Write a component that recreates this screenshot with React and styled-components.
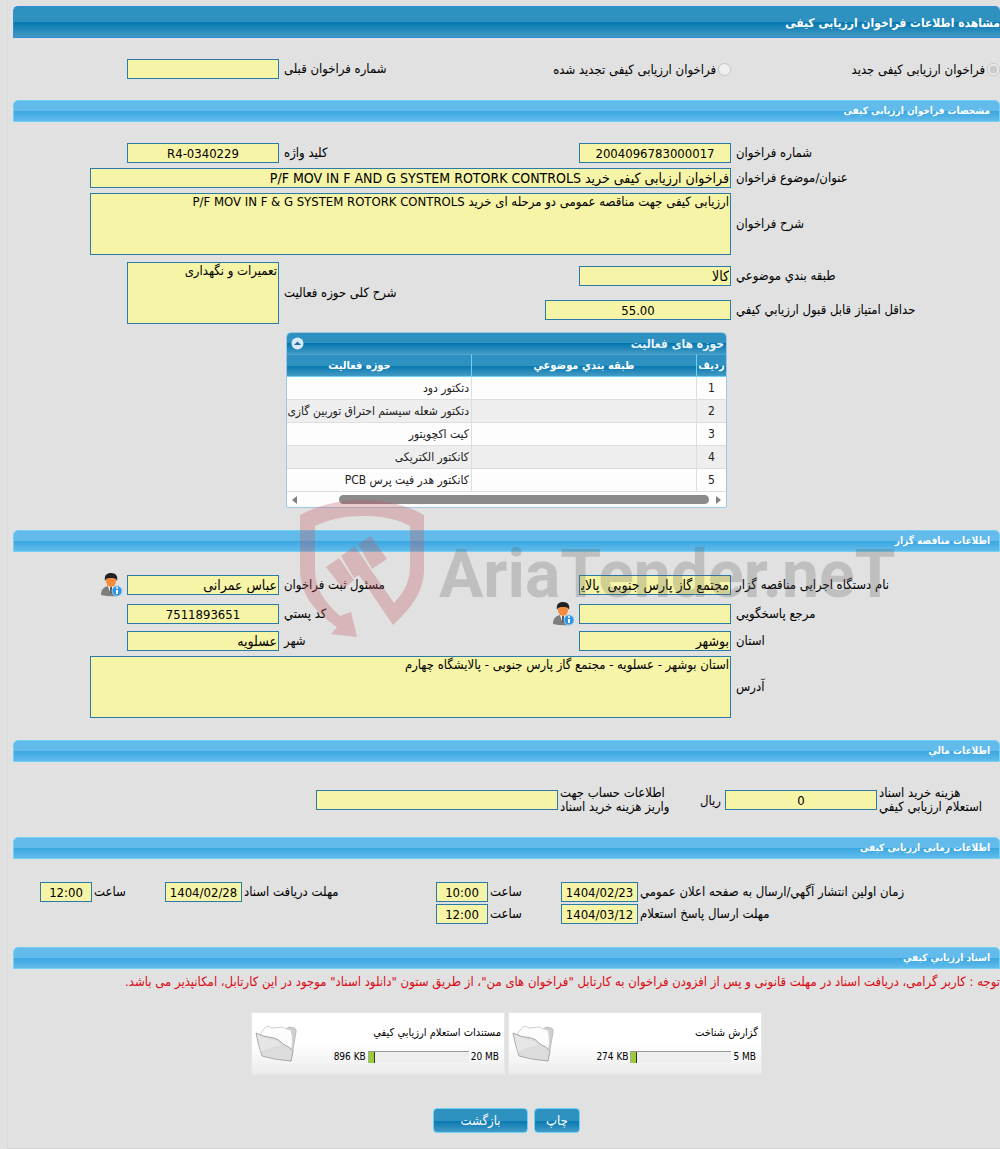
import React, { useState } from "react";
import styled, { createGlobalStyle, css } from "styled-components";

const GlobalStyle = createGlobalStyle`
    * {
        box-sizing: border-box;
    }

    body {
        margin: 0;
        background: #e1e1e1;
        color: #000;
        font-family: Tahoma, "DejaVu Sans Condensed", "DejaVu Sans", sans-serif;
        font-size: 13px;
    }

    input, textarea, button {
        margin: 0;
        font-family: inherit;
    }
`;

const darkGloss = css`
    background: linear-gradient(#2e91c0 0, #2e91c0 50%, #0477b0 50%, #439ac4 100%);
`;

const Page = styled.main`
    position: relative;
    margin-left: 7px;
    padding: 6px 0 15px 0;
    padding-left: 5px;
    border-left: 1px solid #dadada;
    border-bottom: 1px solid #d2d2d2;
    overflow: hidden;
`;

const Title = styled.h1`
    ${darkGloss}
    margin: 0;
    height: 32px;
    line-height: 32px;
    border: 1px solid #2b8dd6;
    border-right: 0;
    border-radius: 5px 5px 0 0;
    color: #fff;
    font-size: 12px;
    font-weight: bold;
`;

const Section = styled.h2`
    margin: 0;
    height: 22px;
    padding: 0 9px;
    line-height: 20px;
    border: 1px solid #72d0f5;
    border-radius: 5px 5px 0 0;
    background: linear-gradient(#62bbea 0, #62bbea 50%, #39a7e2 50%, #62bbea 100%);
    color: #fff;
    font-size: 10px;
    font-weight: bold;
`;

const Form = styled.div`
    display: flex;
    flex-direction: column;
    gap: ${props => props.$gap || 5}px;
    padding-top: ${props => props.$top || 21}px;
    padding-bottom: ${props => props.$bottom || 22}px;
`;

const Line = styled.div`
    display: grid;
    grid-template-columns: ${props => props.$cols || "269fr 452fr 266fr"};
    align-items: center;
    ${props => props.$apart && css`
        padding-top: 2px;
    `}
`;

const Cell = styled.div`
    display: flex;
    align-items: center;
    gap: 4px;
    min-width: 0;
    ${props => props.$span && css`
        grid-column: span ${props.$span};
    `}
`;

const Stack = styled.div`
    display: flex;
    flex-direction: column;
    gap: 14px;
`;

const Label = styled.label`
    margin-right: auto;
    padding-left: ${props => props.$near ? 2 : 5}px;
    line-height: ${props => props.$tall ? 14 : 20}px;
    text-align: left;
    white-space: nowrap;
`;

const LabelStack = styled(Stack)`
    margin-right: auto;
`;

const RadioLabel = styled.label`
    display: flex;
    align-items: center;
    gap: 2px;
    white-space: nowrap;
`;

const Radio = styled.input`
    width: 13px;
    height: 13px;
`;

const box = css`
    border: 1px solid #2a7aaa;
    border-radius: 0;
    outline: none;
    background: #f6f4a6;
    color: #000;
`;

const Field = styled.input`
    ${box}
    flex: none;
    width: ${props => props.$width || 152}px;
    height: 20px;
    padding: 0 1px;
    font-size: ${props => props.$center ? 13 : 14}px;
    text-align: ${props => props.$center ? "center" : "right"};
`;

const Area = styled.textarea`
    ${box}
    display: block;
    width: ${props => props.$width || 152}px;
    height: 62px;
    padding: 0 1px;
    line-height: 15px;
    font-size: 13px;
    resize: none;
`;

const Panel = styled.section`
    width: 441px;
    margin: 3px auto 0;
    border: 1px solid #9cc8e4;
    border-radius: 5px 5px 2px 2px;
    background: #fdfdfd;
    overflow: hidden;
`;

const PanelHead = styled.div`
    ${darkGloss}
    display: flex;
    align-items: center;
    justify-content: space-between;
    height: 21px;
    padding: 0 2px 0 4px;
    color: #e8f4fb;
`;

const PanelTitle = styled.h3`
    margin: 0;
    font-size: 12px;
`;

const Collapse = styled.button`
    display: flex;
    padding: 0;
    border: 0;
    background: none;
`;

const Table = styled.table`
    width: 479px;
    table-layout: fixed;
    border-collapse: separate;
    border-spacing: 0;
    font-size: 12px;

    th {
        ${darkGloss}
        height: 23px;
        padding: 0;
        border-top: 1px solid #4aa3d6;
        border-bottom: 1px solid #72d0f5;
        border-left: 1px solid #72d0f5;
        color: #fff;
        font-size: 11px;
    }

    td {
        height: 23px;
        padding: 0 2px;
        border-bottom: 1px solid #dedede;
        border-left: 1px solid #dedede;
        color: #222;
        white-space: nowrap;
    }

    td:first-child {
        text-align: center;
    }

    tbody tr:nth-child(even) {
        background: #eee;
    }
`;

const Scroll = styled.div`
    display: flex;
    align-items: center;
    gap: 7px;
    height: 15px;
    padding: 0 5px;
`;

const Thumb = styled.div`
    width: 370px;
    height: 9px;
    border-radius: 5px;
    background: #8b8b8b;
`;

const ArrowRight = styled.div`
    border: 4px solid transparent;
    border-left: 5px solid #808080;
    border-right: 0;
`;

const ArrowLeft = styled.div`
    margin-right: auto;
    border: 4px solid transparent;
    border-right: 5px solid #808080;
    border-left: 0;
`;

const Notice = styled.p`
    margin: 5px 0 22px;
    line-height: 16px;
    color: #d90a14;
    white-space: nowrap;
`;

const Files = styled.div`
    display: flex;
    justify-content: center;
    gap: 3px;
`;

const File = styled.div`
    display: flex;
    align-items: center;
    justify-content: space-between;
    width: 254px;
    height: 63px;
    padding: 0 3px;
    border: 1px solid #e6e6e6;
    background: linear-gradient(#fff 50%, #ececec);
    font-size: 10px;
`;

const FileInfo = styled.div`
    display: flex;
    flex-direction: column;
    gap: 11px;
`;

const FileName = styled.div`
    line-height: 15px;
    font-size: 11px;
`;

const Usage = styled.div`
    display: flex;
    align-items: center;
    gap: 2px;
    padding-right: 2px;
    line-height: 12px;
`;

const Meter = styled.div`
    width: 101px;
    height: 12px;
    direction: ltr;
    border-top: 1px solid #999;
    border-left: 1px solid #aaa;
    background: #eee;
`;

const MeterFill = styled.div`
    height: 100%;
    border-right: 1px solid #333;
    background: #9acd32;
`;

const Actions = styled.div`
    display: flex;
    justify-content: center;
    gap: 6px;
    padding-top: 33px;
`;

const Button = styled.button`
    ${darkGloss}
    width: ${props => props.$wide ? 95 : 46}px;
    height: 25px;
    padding: 0;
    border: 1px solid #6cd3f7;
    border-radius: 4px;
    color: #fff;
    font-size: 13px;
`;

// lies over the form, centered on the second section
const Watermark = styled.div`
    position: absolute;
    top: 499px;
    left: 291px;
    display: flex;
    direction: ltr;
    align-items: flex-start;
    gap: 14px;
    pointer-events: none;
`;

const Brand = styled.span`
    padding-top: 29px;
    line-height: 94px;
    color: rgba(90, 90, 90, 0.25);
    font-family: Roboto, "Liberation Sans", sans-serif;
    font-size: 66px;
    font-weight: bold;
    white-space: nowrap;
`;

const Shield = styled.svg`
    flex: none;
    opacity: 0.3;
`;

const UserIcon = () => (
    <svg width="22" height="24" viewBox="0 0 22 24" aria-hidden="true">
        <path d="M0 22 C0 16 3 14 7 13 L13 13 C17 14 18 17 18 23 Q8 24 0 22 Z" fill="#7d7d7d" />
        <path d="M7 13 L10 22 L13 13 Z" fill="#fff" />
        <path d="M9 14 L11 14 L11 20 L10 22 L9 20 Z" fill="#555" />
        <ellipse cx="10" cy="8" rx="5" ry="6" fill="#f58a3c" />
        <path d="M4 8 C3 2 6 0 10 0 C15 0 17 3 16 8 C15 5 13 5 10 5 C7 5 5 5 4 8 Z" fill="#222" />
        <circle cx="16" cy="18" r="5" fill="#2f93e4" stroke="#9fd0f5" />
        <path d="M15 17 H17 V21 H15 Z" fill="#fff" />
        <circle cx="16" cy="15" r="1" fill="#fff" />
    </svg>
);

const FolderIcon = () => (
    <svg width="42" height="38" viewBox="0 0 42 38" aria-hidden="true">
        <path d="M24 10 L34 2 L39 3 Q42 4 41 7 L36 36 L30 34 Z" fill="#cfcfcf" stroke="#bdbdbd" />
        <path d="M5 10 Q9 2 13 1 L17 3 L27 2 Q33 5 36 5 Q39 14 36 28 L20 24 Z" fill="#fcfcfc" stroke="#d0d0d0" />
        <path d="M1 8 Q8 12 19 13 Q24 14 28 19 Q35 22 38 26 L36 36 Q20 35 7 31 Q3 19 1 8 Z" fill="#dcdcdc" stroke="#a9a9a9" />
        <path d="M2 9 Q9 14 19 15 Q23 16 26 20 Q13 22 6 27 Z" fill="#e6e6e6" />
    </svg>
);

const CollapseIcon = () => (
    <svg width="13" height="13" viewBox="0 0 13 13" aria-hidden="true">
        <circle cx="6.500" cy="6.500" r="6" fill="#d9e9f6" />
        <path d="M3 8 L6.500 4.500 L10 8 Z" fill="#1f6ea3" />
    </svg>
);

const ShieldLogo = () => (
    <Shield width="126" height="140" viewBox="299 499 126 140" fill="#c0565f" aria-hidden="true">
        <path d="M300 515 C320 504 342 500 362 500 C384 500 405 504 424 515 V570 C424 590 412 608 393 625 L359 575 L354 578 L341 556 L355 546 L371 570 L394 603 C406 590 410 580 410 566 V526 C395 518 380 516 362 516 C345 516 330 519 315 526 V570 C315 588 325 603 340 616 L351 612 L357 637 L331 634 L337 627 C312 610 300 592 300 570 Z" />
        <path d="M326 567 L339 558 L354 580 L343 589 Z" />
        <path d="M358 544 L371 536 L387 559 L372 569 Z" />
    </Shield>
);

const activities = [
    "دتکتور دود",
    "دتکتور شعله سیستم احتراق توربین گازی",
    "کیت اکچویتور",
    "کانکتور الکتریکی",
    "کانکتور هدر فیت پرس PCB",
];

const files = [
    { name: "گزارش شناخت", used: 274, usedText: "274 KB", max: 5120, maxText: "5 MB" },
    { name: "مستندات استعلام ارزيابي کيفي", used: 896, usedText: "896 KB", max: 20480, maxText: "20 MB" },
];

const dateCols = "362fr 150fr 246fr 150fr 79fr";

function ActivityTable() {
    const [open, setOpen] = useState(true);
    const onToggle = () => setOpen(!open);

    return (
        <Panel>
            <PanelHead>
                <PanelTitle>حوزه های فعالیت</PanelTitle>
                <Collapse type="button" onClick={ onToggle } aria-label="حوزه های فعالیت">
                    <CollapseIcon />
                </Collapse>
            </PanelHead>
            {open && (
                <>
                    <Table>
                        <colgroup>
                            <col width="30" />
                            <col width="225" />
                            <col width="224" />
                        </colgroup>
                        <thead>
                            <tr>
                                <th>ردیف</th>
                                <th>طبقه بندي موضوعي</th>
                                <th>حوزه فعالیت</th>
                            </tr>
                        </thead>
                        <tbody>
                            {activities.map((name, i) => (
                                <tr key={ name }>
                                    <td>{ i + 1 }</td>
                                    <td></td>
                                    <td>{ name }</td>
                                </tr>
                            ))}
                        </tbody>
                    </Table>
                    <Scroll>
                        <ArrowRight />
                        <Thumb />
                        <ArrowLeft />
                    </Scroll>
                </>
            )}
        </Panel>
    );
}

function FileCard({ file }) {
    const percent = Math.max(file.used / file.max * 100, 6);

    return (
        <File>
            <FileInfo>
                <FileName>{ file.name }</FileName>
                <Usage>
                    <span dir="ltr">{ file.maxText }</span>
                    <Meter>
                        <MeterFill style={{ width: `${percent}%` }} />
                    </Meter>
                    <span dir="ltr">{ file.usedText }</span>
                </Usage>
            </FileInfo>
            <FolderIcon />
        </File>
    );
}

function App() {
    return (
        <Page dir="rtl" lang="fa">
            <GlobalStyle />
            <Title>مشاهده اطلاعات فراخوان ارزیابی کیفی</Title>
            <Form $bottom={ 21 }>
                <Line>
                    <Cell>
                        <RadioLabel>
                            <Radio type="radio" name="kind" defaultChecked disabled />
                            فراخوان ارزیابی کیفی جدید
                        </RadioLabel>
                    </Cell>
                    <Cell>
                        <RadioLabel>
                            <Radio type="radio" name="kind" disabled />
                            فراخوان ارزیابی کیفی تجدید شده
                        </RadioLabel>
                        <Label htmlFor="previous">شماره فراخوان قبلی</Label>
                    </Cell>
                    <Cell>
                        <Field id="previous" readOnly />
                    </Cell>
                </Line>
            </Form>

            <Section>مشخصات فراخوان ارزیابی کیفی</Section>
            <Form>
                <Line>
                    <Cell><Label htmlFor="number">شماره فراخوان</Label></Cell>
                    <Cell>
                        <Field id="number" $center readOnly defaultValue="2004096783000017" />
                        <Label htmlFor="keyword">کلید واژه</Label>
                    </Cell>
                    <Cell><Field id="keyword" $center readOnly dir="ltr" defaultValue="R4-0340229" /></Cell>
                </Line>
                <Line>
                    <Cell><Label htmlFor="subject">عنوان/موضوع فراخوان</Label></Cell>
                    <Cell $span={ 2 }>
                        <Field id="subject" $width={ 641 } readOnly defaultValue="فراخوان ارزیابی کیفی خرید P/F MOV IN F AND G SYSTEM ROTORK CONTROLS" />
                    </Cell>
                </Line>
                <Line>
                    <Cell><Label htmlFor="about">شرح فراخوان</Label></Cell>
                    <Cell $span={ 2 }>
                        <Area id="about" $width={ 641 } readOnly defaultValue="ارزیابی کیفی جهت مناقصه عمومی دو مرحله ای خرید P/F MOV IN F & G SYSTEM ROTORK CONTROLS" />
                    </Cell>
                </Line>
                <Line $apart>
                    <Cell>
                        <LabelStack>
                            <Label htmlFor="category">طبقه بندي موضوعي</Label>
                            <Label htmlFor="score">حداقل امتیاز قابل قبول ارزيابي کيفي</Label>
                        </LabelStack>
                    </Cell>
                    <Cell>
                        <Stack>
                            <Field id="category" readOnly defaultValue="کالا" />
                            <Field id="score" $width={ 186 } $center readOnly defaultValue="55.00" />
                        </Stack>
                        <Label htmlFor="scope">شرح کلی حوزه فعالیت</Label>
                    </Cell>
                    <Cell><Area id="scope" readOnly defaultValue="تعمیرات و نگهداری" /></Cell>
                </Line>
                <ActivityTable />
            </Form>

            <Section>اطلاعات مناقصه گزار</Section>
            <Form>
                <Line>
                    <Cell><Label htmlFor="agency">نام دستگاه اجرایی مناقصه گزار</Label></Cell>
                    <Cell>
                        <Field id="agency" readOnly defaultValue="مجتمع گاز پارس جنوبی  پالایشگاه چهارم" />
                        <Label htmlFor="registrar">مسئول ثبت فراخوان</Label>
                    </Cell>
                    <Cell>
                        <Field id="registrar" readOnly defaultValue="عباس عمرانی" />
                        <UserIcon />
                    </Cell>
                </Line>
                <Line>
                    <Cell><Label htmlFor="contact">مرجع پاسخگويي</Label></Cell>
                    <Cell>
                        <Field id="contact" readOnly />
                        <UserIcon />
                        <Label htmlFor="postal">کد پستي</Label>
                    </Cell>
                    <Cell><Field id="postal" $center readOnly defaultValue="7511893651" /></Cell>
                </Line>
                <Line>
                    <Cell><Label htmlFor="province">استان</Label></Cell>
                    <Cell>
                        <Field id="province" readOnly defaultValue="بوشهر" />
                        <Label htmlFor="city">شهر</Label>
                    </Cell>
                    <Cell><Field id="city" readOnly defaultValue="عسلویه" /></Cell>
                </Line>
                <Line>
                    <Cell><Label htmlFor="address">آدرس</Label></Cell>
                    <Cell $span={ 2 }>
                        <Area id="address" $width={ 641 } readOnly defaultValue="استان بوشهر - عسلویه - مجتمع گاز پارس جنوبی - پالایشگاه چهارم" />
                    </Cell>
                </Line>
            </Form>

            <Section>اطلاعات مالي</Section>
            <Form $top={ 24 } $bottom={ 23 }>
                <Line $cols="123fr 319fr 545fr">
                    <Cell>
                        <Label htmlFor="price" $near $tall>
                            هزینه خرید اسناد<br />استعلام ارزيابي کيفي
                        </Label>
                    </Cell>
                    <Cell>
                        <Field id="price" $center readOnly defaultValue="0" />
                        <span>ریال</span>
                        <Label htmlFor="account" $near $tall>
                            اطلاعات حساب جهت<br />واریز هزینه خرید اسناد
                        </Label>
                    </Cell>
                    <Cell><Field id="account" $width={ 242 } readOnly /></Cell>
                </Line>
            </Form>

            <Section>اطلاعات زمانی ارزیابی کیفی</Section>
            <Form $top={ 23 } $bottom={ 23 } $gap={ 2 }>
                <Line $cols={ dateCols }>
                    <Cell><Label htmlFor="publish" $near>زمان اولین انتشار آگهي/ارسال به صفحه اعلان عمومي</Label></Cell>
                    <Cell>
                        <Field id="publish" $width={ 77 } $center readOnly defaultValue="1404/02/23" />
                        <Label htmlFor="publish-time" $near>ساعت</Label>
                    </Cell>
                    <Cell>
                        <Field id="publish-time" $width={ 52 } $center readOnly defaultValue="10:00" />
                        <Label htmlFor="receive" $near>مهلت دریافت اسناد</Label>
                    </Cell>
                    <Cell>
                        <Field id="receive" $width={ 77 } $center readOnly defaultValue="1404/02/28" />
                        <Label htmlFor="receive-time" $near>ساعت</Label>
                    </Cell>
                    <Cell><Field id="receive-time" $width={ 52 } $center readOnly defaultValue="12:00" /></Cell>
                </Line>
                <Line $cols={ dateCols }>
                    <Cell><Label htmlFor="reply" $near>مهلت ارسال پاسخ استعلام</Label></Cell>
                    <Cell>
                        <Field id="reply" $width={ 77 } $center readOnly defaultValue="1404/03/12" />
                        <Label htmlFor="reply-time" $near>ساعت</Label>
                    </Cell>
                    <Cell><Field id="reply-time" $width={ 52 } $center readOnly defaultValue="12:00" /></Cell>
                </Line>
            </Form>

            <Section>اسناد ارزيابي کيفي</Section>
            <Notice>توجه : کاربر گرامی، دریافت اسناد در مهلت قانونی و پس از افزودن فراخوان به کارتابل "فراخوان های من"، از طریق ستون "دانلود اسناد" موجود در این کارتابل، امکانپذیر می باشد.</Notice>
            <Files>
                {files.map(file => <FileCard key={ file.name } file={ file } />)}
            </Files>
            <Actions>
                <Button type="button">چاپ</Button>
                <Button type="button" $wide>بازگشت</Button>
            </Actions>

            <Watermark aria-hidden="true">
                <ShieldLogo />
                <Brand>AriaTender.neT</Brand>
            </Watermark>
        </Page>
    );
}

export default App;
